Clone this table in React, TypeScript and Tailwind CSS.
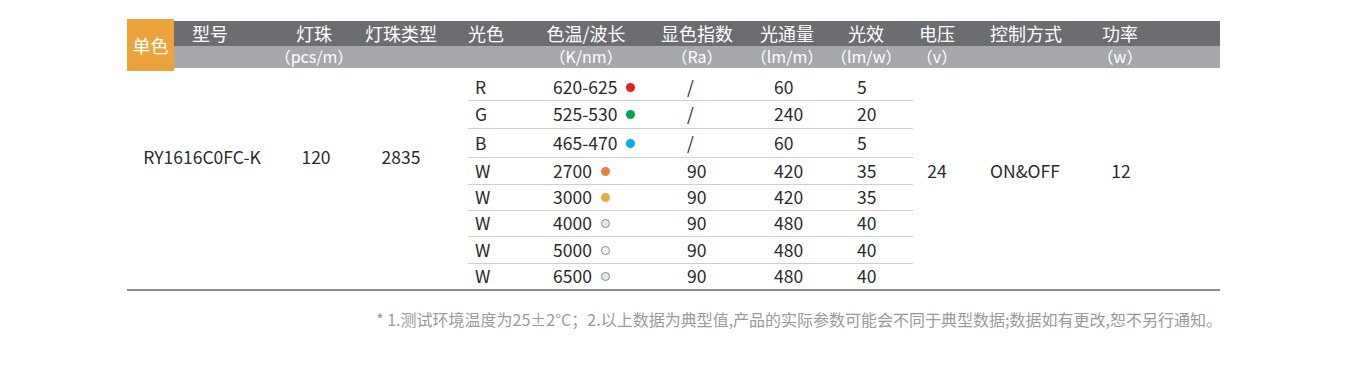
import React from "react";

const FONT = { fontFamily: '"Noto Sans CJK SC", "Noto Sans", sans-serif' };

const HEAD = [
  { title: "型号", sub: "", cls: "w-[72px]" },
  { title: "灯珠", sub: "（pcs/m）", cls: "w-[80px] ml-[28px]" },
  { title: "灯珠类型", sub: "", cls: "w-[80px] ml-[7px]" },
  { title: "光色", sub: "", cls: "w-[80px] ml-[5px]" },
  { title: "色温/波长", sub: "（K/nm）", cls: "w-[80px] ml-[20px]" },
  { title: "显色指数", sub: "（Ra）", cls: "w-[80px] ml-[31px]" },
  { title: "光通量", sub: "（lm/m）", cls: "w-[80px] ml-[10px]" },
  { title: "光效", sub: "（lm/w）", cls: "w-[70px] ml-[4px]" },
  { title: "电压", sub: "（v）", cls: "w-[70px] ml-[1px]" },
  { title: "控制方式", sub: "", cls: "w-[80px] ml-[14px]" },
  { title: "功率", sub: "（w）", cls: "w-[80px] ml-[14px]" },
];

const ROWS = [
  { color: "R", temp: "620-625", dot: "bg-[#ec1c24]", ra: "/", flux: "60", eff: "5", h: "h-[33px] pt-[6px]" },
  { color: "G", temp: "525-530", dot: "bg-[#00a651]", ra: "/", flux: "240", eff: "20", h: "h-[28px]" },
  { color: "B", temp: "465-470", dot: "bg-[#00aeef]", ra: "/", flux: "60", eff: "5", h: "h-[29px]" },
  { color: "W", temp: "2700", dot: "bg-[#e5813a]", ra: "90", flux: "420", eff: "35", h: "h-[27px]" },
  { color: "W", temp: "3000", dot: "bg-[#e1ae3f]", ra: "90", flux: "420", eff: "35", h: "h-[26px]" },
  { color: "W", temp: "4000", dot: "bg-[#e9ebd4] border border-[#8a8a8a]", ra: "90", flux: "480", eff: "40", h: "h-[26px]" },
  { color: "W", temp: "5000", dot: "bg-[#f6f6f0] border border-[#8a8a8a]", ra: "90", flux: "480", eff: "40", h: "h-[27px]" },
  { color: "W", temp: "6500", dot: "bg-[#e6e9ea] border border-[#8a8a8a]", ra: "90", flux: "480", eff: "40", h: "h-[25px]" },
];

export default function App() {
  return (
    <div className="w-[1349px] h-[381px] bg-white pt-[19px] text-[#2b2b2b]" style={FONT}>
      <div className="ml-[127px] w-[1093px]">
        {/* header */}
        <div className="flex h-[49px] items-start">
          <div className="w-[47px] h-[52px] shrink-0 bg-[#eca33c] text-white text-[18px] flex items-center justify-center">
            单色
          </div>
          <div className="flex-1 mt-[2px]">
            <div className="flex h-[25px] bg-[#6c6d70] text-white text-[18px] leading-[25px]">
              {HEAD.map((c) => (
                <div key={c.title} className={`${c.cls} shrink-0 text-center whitespace-nowrap`}>
                  {c.title}
                </div>
              ))}
            </div>
            <div className="flex h-[22px] bg-[#a7a8ab] text-white text-[16px] leading-[20px]">
              {HEAD.map((c) => (
                <div key={c.title} className={`${c.cls} shrink-0 text-center whitespace-nowrap`}>
                  {c.sub}
                </div>
              ))}
            </div>
          </div>
        </div>

        {/* body */}
        <div className="flex border-b-2 border-[#8c8c8c] text-[17.5px]">
          <div className="w-[150px] flex items-center justify-center pb-[43px]">RY1616C0FC-K</div>
          <div className="w-[78px] flex items-center justify-center pb-[43px]">120</div>
          <div className="w-[92px] flex items-center justify-center pb-[43px]">2835</div>
          <div className="ml-[21px] w-[445px]">
            {ROWS.map((r, i) => (
              <div
                key={r.temp}
                className={`flex items-center ${r.h} ${i < ROWS.length - 1 ? "border-b border-[#cfcfcf]" : ""}`}
              >
                <div className="w-[78px] pl-[7px]">{r.color}</div>
                <div className="w-[134px] pl-[7px] flex items-center">
                  {r.temp}
                  <span className={`inline-block w-[9px] h-[9px] rounded-full ml-[9px] ${r.dot}`} />
                </div>
                <div className="w-[87px] pl-[7px]">{r.ra}</div>
                <div className="w-[83px] pl-[7px]">{r.flux}</div>
                <div className="flex-1 pl-[7px]">{r.eff}</div>
              </div>
            ))}
          </div>
          <div className="w-[48px] flex items-center justify-center pb-[15px]">24</div>
          <div className="w-[128px] flex items-center justify-center pb-[15px]">ON&amp;OFF</div>
          <div className="w-[64px] flex items-center justify-center pb-[15px]">12</div>
          <div className="flex-1" />
        </div>

        {/* note */}
        <div className="w-[1095px] mt-[16px] text-right text-[16px] text-[#9a9a9a] whitespace-nowrap">
          * 1.测试环境温度为25±2°C；2.以上数据为典型值,产品的实际参数可能会不同于典型数据;数据如有更改,恕不另行通知。
        </div>
      </div>
    </div>
  );
}
